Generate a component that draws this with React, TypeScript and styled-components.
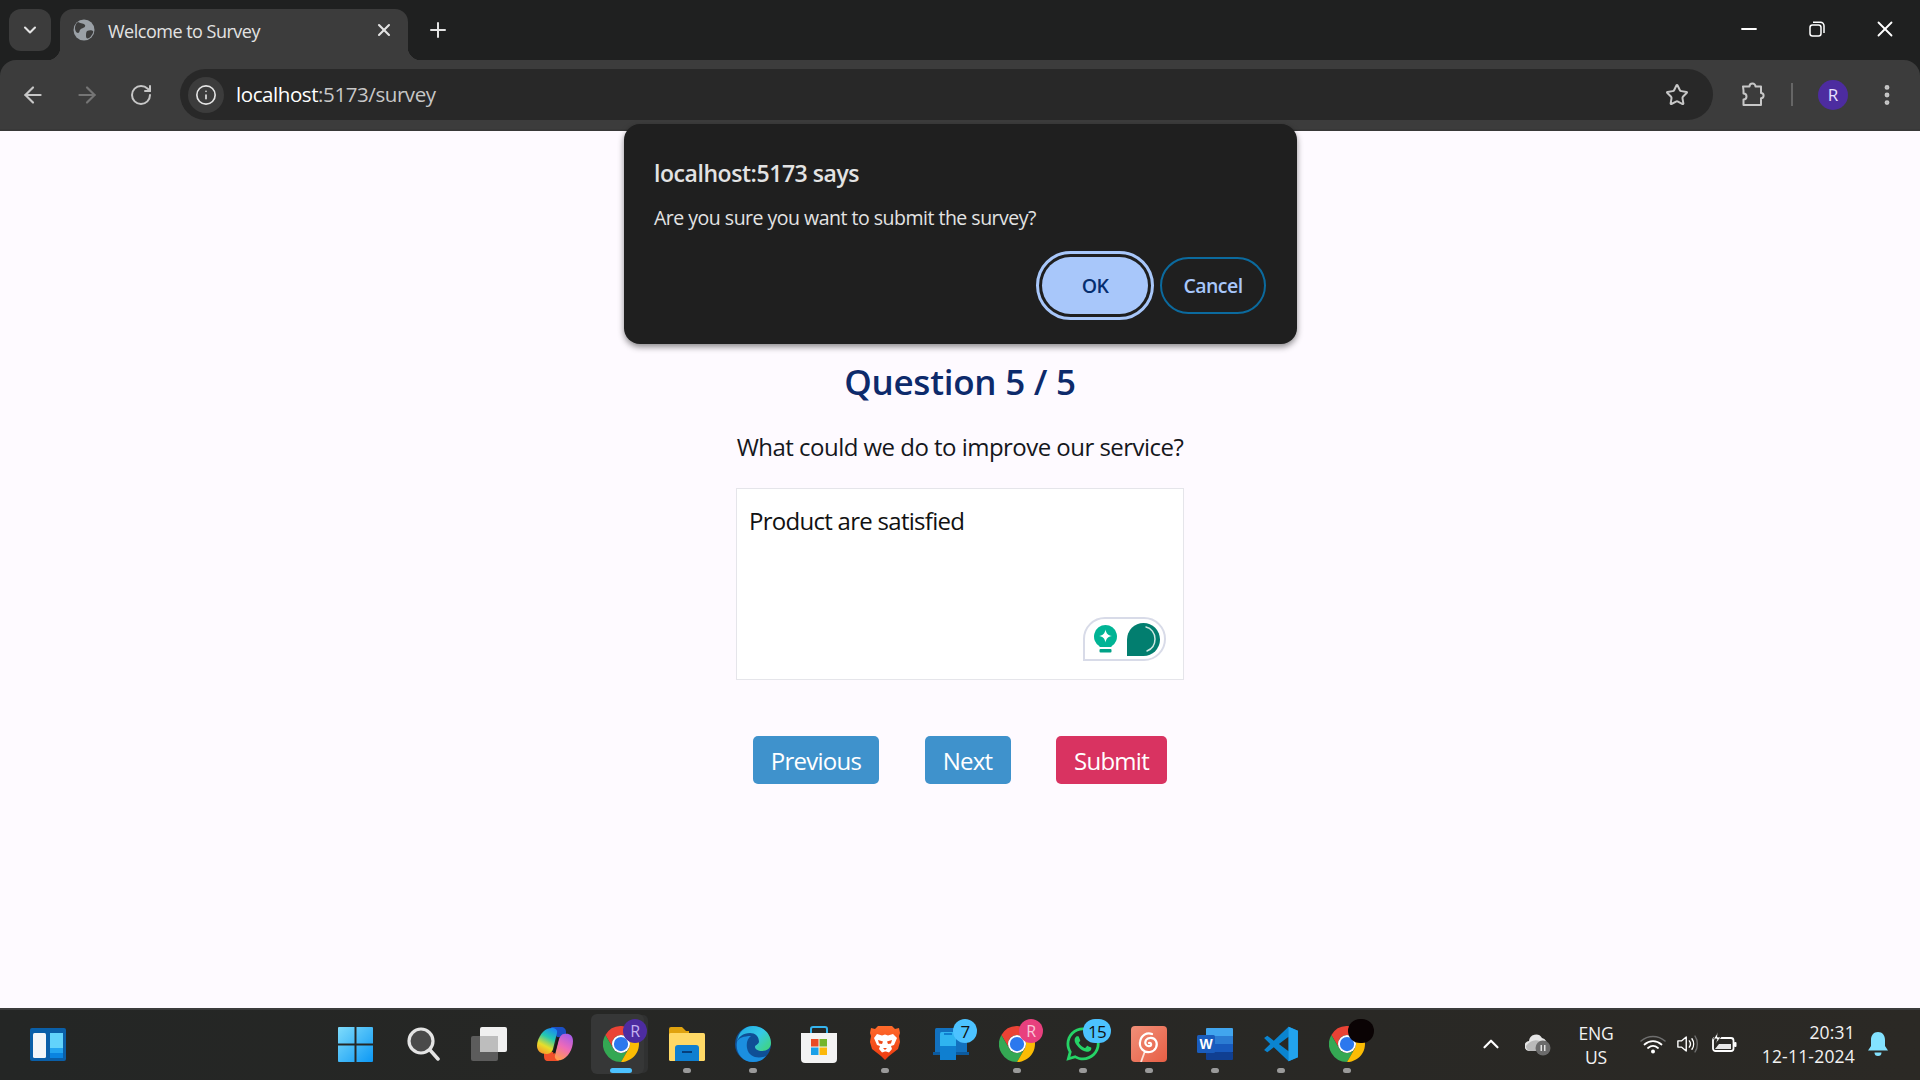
import React from "react";
import styled, { createGlobalStyle } from "styled-components";
import { ArrowLeft, ArrowRight, ChevronDown, ChevronUp, Info, Minus, MoreVertical, Plus, RotateCw, Star, X } from "lucide-react";
import { FaWhatsapp } from "react-icons/fa";

const uiFont = `"Open Sans", "Noto Sans", sans-serif`;

const GlobalStyle = createGlobalStyle`
  html, body {
    margin: 0;
    padding: 0;
    height: 100%;
    overflow: hidden;
    font-family: ${uiFont};
  }
  * {
    box-sizing: border-box;
  }
`;

const Screen = styled.div`
  position: relative;
  display: flex;
  flex-direction: column;
  width: 1920px;
  height: 1080px;
  background: #1f2020;
`;

/* tab strip */
const TabStrip = styled.div`
  display: flex;
  align-items: flex-start;
  height: 60px;
  padding: 9px 0 0 9px;
  color: #fff;
`;

const TabSearch = styled.div`
  display: flex;
  align-items: center;
  justify-content: center;
  width: 42px;
  height: 42px;
  border-radius: 12px;
  background: #3c3c3c;
`;

const Tab = styled.div`
  position: relative;
  display: flex;
  align-items: center;
  width: 348px;
  height: 51px;
  margin-left: 9px;
  padding: 0 14px 9px 13px;
  border-radius: 13px 13px 0 0;
  background: #3c3c3c;

  &::before,
  &::after {
    content: "";
    position: absolute;
    bottom: 0;
    width: 13px;
    height: 13px;
  }
  &::before {
    left: -13px;
    background: radial-gradient(circle at 0 0, transparent 13px, #3c3c3c 13.5px);
  }
  &::after {
    right: -13px;
    background: radial-gradient(circle at 100% 0, transparent 13px, #3c3c3c 13.5px);
  }
`;

const TabTitle = styled.span`
  flex: 1;
  margin: 2px 0 0 13px;
  font-size: 18px;
  letter-spacing: -0.5px;
  color: #e3e3e3;
`;

const NewTab = styled.div`
  display: flex;
  align-items: center;
  justify-content: center;
  width: 42px;
  height: 42px;
  margin-left: 9px;
`;

const WindowControls = styled.div`
  display: flex;
  margin-left: auto;
  padding-right: 1px;
`;

const WindowButton = styled.div`
  display: flex;
  align-items: center;
  justify-content: center;
  width: 68px;
  height: 40px;
`;

/* toolbar */
const Toolbar = styled.div`
  display: flex;
  align-items: center;
  height: 71px;
  padding: 0 19px 0 6px;
  border-radius: 16px 16px 0 0;
  border-bottom: 2px solid #383838;
  background: #3c3c3c;
`;

const NavButton = styled.div<{ $dim?: boolean }>`
  display: flex;
  align-items: center;
  justify-content: center;
  width: 54px;
  color: ${(p) => (p.$dim ? "#757575" : "#c7c7c7")};
`;

const Omnibox = styled.div`
  display: flex;
  align-items: center;
  flex: 1;
  height: 51px;
  margin-left: 12px;
  padding: 0 24px 0 8px;
  border-radius: 26px;
  background: #282828;
`;

const InfoChip = styled.div`
  display: flex;
  align-items: center;
  justify-content: center;
  width: 36px;
  height: 36px;
  border-radius: 50%;
  background: #3c3c3c;
  color: #e3e3e3;
`;

const Url = styled.div`
  flex: 1;
  margin: -2px 0 0 12px;
  font-size: 20.5px;
  letter-spacing: -0.42px;
  color: #c7c7c7;

  b {
    font-weight: 400;
    color: #fff;
  }
`;

const ToolSlot = styled.div<{ $w: number }>`
  display: flex;
  align-items: center;
  justify-content: center;
  width: ${(p) => p.$w}px;
  color: #c7c7c7;
`;

const ToolDivider = styled.div`
  width: 2px;
  height: 23px;
  background: #666;
`;

const Avatar = styled.div`
  display: flex;
  align-items: center;
  justify-content: center;
  width: 30px;
  height: 30px;
  border-radius: 50%;
  background: #4d2ca0;
  color: #e9e0ff;
  font-size: 17px;
`;

/* page */
const Page = styled.main`
  flex: 1;
  background: #fefaff;
`;

const Survey = styled.div`
  display: flex;
  flex-direction: column;
  align-items: center;
  width: 448px;
  margin: 0 auto;
  padding-top: 228px;
`;

const Heading = styled.h1`
  margin: 0;
  font-size: 35px;
  line-height: 46px;
  font-weight: 600;
  letter-spacing: -0.25px;
  white-space: nowrap;
  color: #0d2a6b;
`;

const Question = styled.p`
  margin: 26px 0 1px;
  font-size: 24px;
  line-height: 32px;
  letter-spacing: -0.53px;
  white-space: nowrap;
  color: #15171c;
`;

const AnswerBox = styled.div`
  position: relative;
  width: 448px;
  height: 192px;
  margin-top: 24px;
`;

const Answer = styled.textarea`
  display: block;
  width: 100%;
  height: 100%;
  padding: 15px 12px;
  border: 1px solid #e5e5ea;
  background: #fff;
  font-family: ${uiFont};
  font-size: 24px;
  line-height: 33px;
  letter-spacing: -0.72px;
  color: #111;
  resize: none;
  outline: none;
`;

const AssistBadge = styled.div`
  position: absolute;
  left: 347px;
  top: 129px;
  display: flex;
  align-items: center;
  gap: 10px;
  width: 83px;
  height: 44px;
  padding-left: 9px;
  border: 2px solid #d8dbe8;
  border-radius: 22px 22px 22px 0;
  background: #fff;
`;

const ButtonRow = styled.div`
  display: flex;
  gap: 45.5px;
  margin-top: 56px;
`;

const ActionButton = styled.button<{ $w: number; $danger?: boolean }>`
  width: ${(p) => p.$w}px;
  height: 48px;
  padding: 0;
  border: none;
  border-radius: 5px;
  background: ${(p) => (p.$danger ? "#d93361" : "#3f92cc")};
  color: #fff;
  font-family: ${uiFont};
  font-size: 24px;
  letter-spacing: -0.75px;
`;

/* alert dialog */
const Dialog = styled.div`
  position: absolute;
  top: 124px;
  left: calc(50% - 336px);
  width: 673px;
  height: 220px;
  padding: 33px 31px 30px 30px;
  border-radius: 16px;
  background: #1f1f1f;
  box-shadow: 0 3px 6px rgba(0, 0, 0, 0.45);
  color: #e3e3e3;
`;

const DialogTitle = styled.div`
  font-size: 23px;
  line-height: 32px;
  font-weight: 600;
  letter-spacing: -0.44px;
`;

const DialogMessage = styled.div`
  margin-top: 15px;
  font-size: 19.5px;
  line-height: 28px;
  letter-spacing: -0.5px;
`;

const DialogActions = styled.div`
  display: flex;
  justify-content: flex-end;
  gap: 12px;
  margin-top: 25px;
`;

const DialogButton = styled.button<{ $primary?: boolean }>`
  width: 106px;
  height: 57px;
  padding: 0;
  border: ${(p) => (p.$primary ? "none" : "2px solid #0b6a9e")};
  border-radius: 29px;
  background: ${(p) => (p.$primary ? "#a8c7fa" : "transparent")};
  color: ${(p) => (p.$primary ? "#062e6f" : "#a8c7fa")};
  font-family: ${uiFont};
  font-size: 19.5px;
  font-weight: 600;
  letter-spacing: -0.55px;
  outline: ${(p) => (p.$primary ? "3px solid #a8c7fa" : "none")};
  outline-offset: 3px;
`;

/* taskbar */
const Taskbar = styled.footer`
  display: flex;
  height: 72px;
  padding-left: 15px;
  background: linear-gradient(90deg, #242625, #2b2925);
  box-shadow: inset 0 2px 0 #3c3c3c;
  color: #fff;
`;

const AppSlot = styled.div<{ $start?: boolean; $gap?: number }>`
  position: relative;
  display: flex;
  align-items: center;
  justify-content: center;
  flex: none;
  width: 66px;
  height: 72px;
  margin-left: ${(p) => p.$gap ?? 0}px;
  padding-right: ${(p) => (p.$start ? 3 : 0)}px;
`;

const ActiveTile = styled.div`
  position: absolute;
  left: 3px;
  top: 6px;
  width: 53px;
  height: 60px;
  border-radius: 6px;
  background: #363737;
  box-shadow: 5px 0 0 -1px #303131;
`;

const TileIcon = styled.span`
  position: relative;
  line-height: 0;
`;

const RunDot = styled.div`
  position: absolute;
  left: 29px;
  top: 60px;
  width: 8px;
  height: 5px;
  border-radius: 3px;
  background: #9a9a9a;
`;

const ActiveBar = styled.div`
  position: absolute;
  left: 22px;
  top: 60px;
  width: 22px;
  height: 5px;
  border-radius: 3px;
  background: #4cc2ff;
`;

const Badge = styled.div<{ $bg: string; $w?: number; $dark?: boolean; $ink?: string }>`
  position: absolute;
  left: ${(p) => 47 - (p.$w ?? 24) / 2}px;
  top: 11px;
  display: flex;
  align-items: center;
  justify-content: center;
  width: ${(p) => p.$w ?? 24}px;
  height: 24px;
  border-radius: 12px;
  background: ${(p) => p.$bg};
  color: ${(p) => (p.$dark ? "#111" : p.$ink ?? "#c4b2f0")};
  font-size: ${(p) => (p.$dark ? 17 : 16)}px;
  letter-spacing: -0.6px;
`;

const Tray = styled.div`
  display: flex;
  margin-left: auto;
  padding-right: 22px;
`;

const TraySlot = styled.div<{ $w: number; $lift?: number }>`
  display: flex;
  align-items: center;
  justify-content: center;
  width: ${(p) => p.$w}px;
  padding-bottom: ${(p) => p.$lift ?? 0}px;
`;

const Lang = styled.div`
  align-self: center;
  width: 66px;
  padding-top: 2px;
  text-align: center;
  font-size: 17.5px;
  line-height: 24px;
  letter-spacing: -0.2px;
  color: #f2f2f2;
`;

const Clock = styled.div`
  width: 109px;
  padding-right: 3px;
  text-align: right;
  font-size: 17.5px;
  line-height: 24px;
  letter-spacing: 0.2px;
  color: #f2f2f2;
`;

function Globe() {
  return (
    <svg width="22" height="22" viewBox="0 0 22 22">
      <circle cx="11" cy="11" r="10.5" fill="#9aa0a6" />
      <path d="M5 3c3 2 6 1 7 3s-2 3-4 4-1 4-3 4-3-3-3-5 1-5 3-6zM14 12c2-1 5-1 6 0s-2 6-4 7-3 0-3-2 0-4 1-5z" fill="#3c3c3c" />
    </svg>
  );
}

function RestoreIcon() {
  return (
    <svg width="16" height="16" viewBox="0 0 16 16" fill="none" stroke="#fff" strokeWidth="1.5">
      <rect x="1" y="4" width="11" height="11" rx="2.5" />
      <path d="M4 1.2h7.5A3.5 3.5 0 0 1 15 4.7V12" />
    </svg>
  );
}

function PuzzleIcon() {
  return (
    <svg width="26" height="26" viewBox="0 0 26 26" fill="none" stroke="#c7c7c7" strokeWidth="2" strokeLinejoin="round" style={{ marginLeft: 2 }}>
      <path d="M3 5.5h6.5a3 3 0 0 1 6 0H21v6.5a2.6 2.6 0 0 1 0 5.2V24H3.5v-5.500a3 3 0 0 0 0-6V9.500z" transform="translate(0 -1)" />
    </svg>
  );
}

function ChromeLogo() {
  return (
    <svg width="36" height="36" viewBox="0 0 48 48">
      <path d="M3.2 12A24 24 0 0 1 44.78 12L24 12A12 12 0 0 0 13.6 30Z" fill="#ea4335" />
      <path d="M3.2 12A24 24 0 0 0 24 48L34.4 30A12 12 0 0 1 13.6 30Z" fill="#34a853" />
      <path d="M44.78 12A24 24 0 0 1 24 48L34.4 30A12 12 0 0 0 24 12Z" fill="#fbbc04" />
      <circle cx="24" cy="24" r="12" fill="#fff" />
      <circle cx="24" cy="24" r="9.500" fill="#2b78ee" />
    </svg>
  );
}

function WidgetsIcon() {
  return (
    <svg width="36" height="33" viewBox="0 0 36 33">
      <rect width="36" height="33" rx="2" fill="#0a5fa8" />
      <rect x="3" y="5" width="13" height="25" rx="1.5" fill="#f4f6f8" />
      <rect x="20" y="5" width="13" height="15" fill="#62d3fb" />
      <rect x="20" y="20" width="13" height="5" fill="#23a5f0" />
      <rect x="20" y="25" width="13" height="5" fill="#0a84e0" />
    </svg>
  );
}

function StartIcon() {
  return (
    <svg width="35" height="35" viewBox="0 0 35 35">
      <defs>
        <linearGradient id="startFill" x1="0" y1="0" x2="1" y2="1">
          <stop offset="0" stopColor="#7fdcfb" />
          <stop offset="1" stopColor="#0c98f5" />
        </linearGradient>
      </defs>
      <path d="M1 0h15.500v16.500H0V1a1 1 0 0 1 1-1zM18.500 0H34a1 1 0 0 1 1 1v15.500H18.500zM0 18.500h16.500V35H1a1 1 0 0 1-1-1zM18.500 18.500H35V34a1 1 0 0 1-1 1H18.500z" fill="url(#startFill)" />
    </svg>
  );
}

function SearchIcon() {
  return (
    <svg width="33" height="34" viewBox="0 0 33 34">
      <circle cx="14" cy="14" r="12" fill="#4a4a4a" stroke="#e4e4e4" strokeWidth="3.200" />
      <path d="M23 23l8 9" stroke="#e4e4e4" strokeWidth="3.500" strokeLinecap="round" />
    </svg>
  );
}

function TaskViewIcon() {
  return (
    <svg width="36" height="34" viewBox="0 0 36 34">
      <rect y="9" width="27" height="25" rx="2" fill="#5c5c5c" />
      <rect x="9" width="27" height="25" rx="2" fill="#f0f0f0" />
      <rect x="9" y="9" width="18" height="16" fill="#bdbdbd" />
    </svg>
  );
}

function CopilotIcon() {
  return (
    <svg width="36" height="34" viewBox="0 0 36 34">
      <defs>
        <linearGradient id="copilotLeft" x1="0.7" y1="0" x2="0.3" y2="1">
          <stop offset="0" stopColor="#1c8cf0" />
          <stop offset="0.35" stopColor="#24c9b0" />
          <stop offset="0.7" stopColor="#e8de2a" />
          <stop offset="1" stopColor="#f59a2a" />
        </linearGradient>
        <linearGradient id="copilotRight" x1="0.7" y1="0" x2="0.3" y2="1">
          <stop offset="0" stopColor="#a75ce8" />
          <stop offset="0.5" stopColor="#ee6ab8" />
          <stop offset="1" stopColor="#ff9a50" />
        </linearGradient>
      </defs>
      <path d="M14 0h10c3 0 5 2 5 5v5h-9z" fill="#1b4fc4" />
      <path d="M22 34H11c-3 0-4-2-4-5v-4h10z" fill="#f0502a" />
      <path d="M10 2c5-2 11-1 10 4l-4 16c-1 4-4 5-7 5-5 0-9-3-9-8 0-6 4-14 10-17z" fill="url(#copilotLeft)" />
      <path d="M27 7c5-1 9 1 9 7 0 8-5 17-12 19-4 1-7-1-6-5l4-16c1-3 3-5 5-5z" fill="url(#copilotRight)" />
      <path d="M20.500 10.500l-4.500 16 2-.5 4-15z" fill="#161616" />
    </svg>
  );
}

function ExplorerIcon() {
  return (
    <svg width="36" height="34" viewBox="0 0 36 34">
      <path d="M0 2a2 2 0 0 1 2-2h11l4 4h3v4H0z" fill="#e0a30f" />
      <rect y="6" width="36" height="28" rx="1.500" fill="#ffd966" />
      <path d="M6 34V21a3 3 0 0 1 3-3h18a3 3 0 0 1 3 3v13z" fill="#0f7fd0" />
      <rect x="13" y="24" width="10" height="2" fill="#063f7a" />
    </svg>
  );
}

function EdgeIcon() {
  return (
    <svg width="36" height="36" viewBox="0 0 36 36">
      <defs>
        <linearGradient id="edgeTop" x1="0" y1="0" x2="1" y2="0.700">
          <stop offset="0" stopColor="#1fa6e0" />
          <stop offset="0.6" stopColor="#35c9e8" />
          <stop offset="1" stopColor="#3fd38c" />
        </linearGradient>
      </defs>
      <circle cx="18" cy="18" r="18" fill="#0f4f96" />
      <path d="M2 16C3 6 10 0 18 0c10 0 18 8 18 17 0 5-4 8-9 8-4 0-7-2-7-4s3-2 4-5c0-6-4-9-9-9C8 7 3 11 2 16z" fill="url(#edgeTop)" />
      <path d="M2 16C0 26 7 36 18 36c6 0 10-2 13-6-7 3-17 2-19-8-1-6 1-10 4-12C9 10 3 12 2 16z" fill="#1b8fe0" />
    </svg>
  );
}

function StoreIcon() {
  return (
    <svg width="36" height="37" viewBox="0 0 36 37">
      <path d="M10 8V3a2 2 0 0 1 2-2h12a2 2 0 0 1 2 2v5" fill="none" stroke="#35b4ee" strokeWidth="2" />
      <path d="M0 7h36v26a4 4 0 0 1-4 4H4a4 4 0 0 1-4-4z" fill="#f3f3f3" />
      <rect x="10" y="13" width="7.500" height="7.500" fill="#ea4b25" />
      <rect x="18.500" y="13" width="7.500" height="7.500" fill="#73b52b" />
      <rect x="10" y="21.500" width="7.500" height="7.500" fill="#1ba1e8" />
      <rect x="18.500" y="21.500" width="7.500" height="7.500" fill="#fbb80a" />
    </svg>
  );
}

function BraveIcon() {
  return (
    <svg width="30" height="36" viewBox="0 0 30 36">
      <defs>
        <linearGradient id="braveFill" x1="0" y1="0" x2="0" y2="1">
          <stop offset="0" stopColor="#ff6a2a" />
          <stop offset="1" stopColor="#ee3a10" />
        </linearGradient>
      </defs>
      <path d="M8 0h14l3 3 4-1 1 5-1 3 1 6-2 7-9 7-4 4-4-4-9-7-2-7 1-6-1-3 1-5 4 1z" fill="url(#braveFill)" />
      <path d="M7 8l5 1.500 3-1 3 1 5-1.500 4 4-3 7-3 1 1 3-3 3.500-3-1-1 0-3 1-3-3.500 1-3-3-1-3-7z" fill="#fff" />
      <path d="M8 14l5 1.500-1 2.500-3-.5zM22 14l-5 1.500 1 2.500 3-.5zM13 22h4l-2 2z" fill="#f04a1a" />
    </svg>
  );
}

function DevicesIcon() {
  return (
    <svg width="36" height="32" viewBox="0 0 36 32">
      <rect x="2" width="32" height="25" rx="1.500" fill="#1271bf" />
      <rect y="24" width="36" height="3" fill="#0c5a9e" />
      <rect x="7" y="4" width="16" height="28" rx="1.500" fill="#2fb4f0" />
      <rect x="7" y="18" width="16" height="14" fill="#0f7fd0" />
      <rect x="11" y="5" width="8" height="2" fill="#0f7fd0" />
    </svg>
  );
}

function LollipopIcon() {
  return (
    <svg width="36" height="36" viewBox="0 0 36 36">
      <defs>
        <linearGradient id="lolliFill" x1="0" y1="0" x2="1" y2="1">
          <stop offset="0" stopColor="#f08f78" />
          <stop offset="1" stopColor="#e85f45" />
        </linearGradient>
      </defs>
      <rect width="36" height="36" rx="4" fill="url(#lolliFill)" />
      <path d="M14 25l-4 11" stroke="#fbe3da" strokeWidth="1.800" />
      <path d="M18 17c2-1 3 2 1 3-3 1-6-2-4-6 2-3 8-3 10 1s0 10-6 11-11-4-10-10c1-7 7-10 12-8" fill="none" stroke="#fff" strokeWidth="2.200" strokeLinecap="round" />
    </svg>
  );
}

function WordIcon() {
  return (
    <svg width="36" height="32" viewBox="0 0 36 32">
      <rect x="9" width="27" height="9" rx="1" fill="#41a5ee" />
      <rect x="9" y="8" width="27" height="8" fill="#2b7cd3" />
      <rect x="9" y="16" width="27" height="8" fill="#185abd" />
      <rect x="9" y="24" width="27" height="8" rx="1" fill="#103f91" />
      <rect y="7" width="18" height="18" rx="1.500" fill="#1a5cbc" />
      <text x="9" y="21" textAnchor="middle" fontFamily="Liberation Sans, sans-serif" fontSize="14" fontWeight="700" fill="#fff">W</text>
    </svg>
  );
}

function CodeIcon() {
  return (
    <svg width="36" height="36" viewBox="0 0 100 100">
      <path fillRule="evenodd" d="M71 2L30 41 12 27 3 33l17 17L3 67l9 6 18-14 41 39 26-11V13zM71 30v40L44 50z" fill="#0a84d0" />
      <path d="M71 2l26 11v74L71 98z" fill="#22a3ee" />
    </svg>
  );
}

function CloudIcon() {
  return (
    <svg width="26" height="24" viewBox="0 0 26 24">
      <path d="M5 19a5 5 0 0 1-1-10 7 7 0 0 1 13-3 5.500 5.500 0 0 1 4 8v5z" fill="#e6e6e6" />
      <path d="M1 14c4-5 8-7 14-5 4-1 6 2 6 5v5H5a5 5 0 0 1-4-5z" fill="#9c9c9c" opacity="0.600" />
      <circle cx="18" cy="16" r="7.500" fill="#6b6b6b" />
      <path d="M16.200 13v6M19.800 13v6" stroke="#fff" strokeWidth="1.200" />
    </svg>
  );
}

function WifiIcon() {
  return (
    <svg width="26" height="20" viewBox="0 0 26 20" fill="none" strokeLinecap="round">
      <path d="M1 7c7-6 17-6 24 0" stroke="#6e6e6e" strokeWidth="1.500" />
      <path d="M4.500 10.500c5-4.500 12-4.500 17 0M8 14c3-2.500 7-2.500 10 0" stroke="#fff" strokeWidth="1.800" />
      <circle cx="13" cy="17.500" r="2" fill="#fff" />
    </svg>
  );
}

function VolumeIcon() {
  return (
    <svg width="25" height="22" viewBox="0 0 25 22" fill="none" strokeWidth="1.600" strokeLinejoin="round" strokeLinecap="round">
      <path d="M1 7.500h4L10.500 3v16L5 14.500H1z" stroke="#fff" />
      <path d="M14 7.500c1.500 2 1.500 5 0 7M17 5c2.500 3.500 2.500 8.500 0 12" stroke="#fff" />
      <path d="M20.500 2c3.500 5 3.500 13 0 18" stroke="#6e6e6e" />
    </svg>
  );
}

function BatteryIcon() {
  return (
    <svg width="25" height="20" viewBox="0 0 25 20" fill="none">
      <rect x="1" y="6" width="20.500" height="13" rx="2.500" stroke="#fff" strokeWidth="1.800" />
      <path d="M3 17l4-5h12v5z" fill="#e8e8e8" />
      <rect x="22" y="10" width="2.500" height="5" rx="1" fill="#fff" />
      <path d="M6 0L1.500 7H5l-1.500 5L9 5H5.500z" fill="#fff" stroke="#2b2925" strokeWidth="0.800" />
    </svg>
  );
}

function BellIcon() {
  return (
    <svg width="20" height="24" viewBox="0 0 20 24">
      <path d="M10 0c4.500 0 7 3.500 7 8v6l3 4.500H0L3 14V8c0-4.500 2.500-8 7-8z" fill="#83e2ff" />
      <path d="M6.500 20.500h7a3.500 3.500 0 0 1-7 0z" fill="#83e2ff" />
    </svg>
  );
}

function BulbIcon() {
  return (
    <svg width="23" height="28" viewBox="0 0 23 28">
      <path d="M11.500 0a11.500 11.500 0 0 1 6 21.300V22H5.500v-.7A11.500 11.500 0 0 1 11.500 0z" fill="#00b495" />
      <rect x="5.500" y="24" width="12" height="3.500" rx="1" fill="#00a287" />
      <path d="M11.500 4.500c.7 4 2.500 5.800 6.500 6.500-4 .7-5.800 2.500-6.500 6.500-.7-4-2.500-5.800-6.500-6.500 4-.7 5.800-2.500 6.500-6.500z" fill="#fff" />
    </svg>
  );
}

function BlobIcon() {
  return (
    <svg width="33" height="33" viewBox="0 0 33 33">
      <path d="M0 33V16.500A16.500 16.500 0 1 1 16.500 33z" fill="#027e6f" />
      <path d="M19 4c5 1 9 6 9 12s-3 10-8 12" fill="none" stroke="#cfe8e2" strokeWidth="1.500" strokeLinecap="round" />
    </svg>
  );
}

export default function App() {
  return (
    <>
      <GlobalStyle />
      <Screen>
        <TabStrip>
          <TabSearch>
            <ChevronDown size={20} strokeWidth={2.5} color="#e3e3e3" />
          </TabSearch>
          <Tab>
            <Globe />
            <TabTitle>Welcome to Survey</TabTitle>
            <X size={20} strokeWidth={2.5} color="#e3e3e3" />
          </Tab>
          <NewTab>
            <Plus size={24} strokeWidth={2} color="#e3e3e3" />
          </NewTab>
          <WindowControls>
            <WindowButton>
              <Minus size={24} strokeWidth={1.8} />
            </WindowButton>
            <WindowButton>
              <RestoreIcon />
            </WindowButton>
            <WindowButton>
              <X size={26} strokeWidth={1.7} />
            </WindowButton>
          </WindowControls>
        </TabStrip>

        <Toolbar>
          <NavButton>
            <ArrowLeft size={26} strokeWidth={2} />
          </NavButton>
          <NavButton $dim>
            <ArrowRight size={26} strokeWidth={2} />
          </NavButton>
          <NavButton>
            <RotateCw size={24} strokeWidth={2} />
          </NavButton>
          <Omnibox>
            <InfoChip>
              <Info size={22} strokeWidth={1.8} />
            </InfoChip>
            <Url>
              <b>localhost</b>:5173/survey
            </Url>
            <Star size={24} strokeWidth={2} color="#c7c7c7" />
          </Omnibox>
          <ToolSlot $w={78}>
            <PuzzleIcon />
          </ToolSlot>
          <ToolDivider />
          <ToolSlot $w={80}>
            <Avatar>R</Avatar>
          </ToolSlot>
          <ToolSlot $w={28}>
            <MoreVertical size={26} strokeWidth={2.5} />
          </ToolSlot>
        </Toolbar>

        <Page>
          <Survey>
            <Heading>Question 5 / 5</Heading>
            <Question>What could we do to improve our service?</Question>
            <AnswerBox>
              <Answer readOnly defaultValue="Product are satisfied" />
              <AssistBadge>
                <BulbIcon />
                <BlobIcon />
              </AssistBadge>
            </AnswerBox>
            <ButtonRow>
              <ActionButton $w={126}>Previous</ActionButton>
              <ActionButton $w={86}>Next</ActionButton>
              <ActionButton $w={111} $danger>
                Submit
              </ActionButton>
            </ButtonRow>
          </Survey>
        </Page>

        <Taskbar>
          <AppSlot>
            <WidgetsIcon />
          </AppSlot>
          <AppSlot $start $gap={243}>
            <StartIcon />
          </AppSlot>
          <AppSlot>
            <SearchIcon />
          </AppSlot>
          <AppSlot>
            <TaskViewIcon />
          </AppSlot>
          <AppSlot>
            <CopilotIcon />
          </AppSlot>
          <AppSlot>
            <ActiveTile />
            <TileIcon>
              <ChromeLogo />
            </TileIcon>
            <Badge $bg="#4d2ca0">R</Badge>
            <ActiveBar />
          </AppSlot>
          <AppSlot>
            <ExplorerIcon />
            <RunDot />
          </AppSlot>
          <AppSlot>
            <EdgeIcon />
            <RunDot />
          </AppSlot>
          <AppSlot>
            <StoreIcon />
          </AppSlot>
          <AppSlot>
            <BraveIcon />
            <RunDot />
          </AppSlot>
          <AppSlot>
            <DevicesIcon />
            <Badge $bg="#4cc2ff" $dark>
              7
            </Badge>
          </AppSlot>
          <AppSlot>
            <ChromeLogo />
            <Badge $bg="#e8407e" $ink="#f9c6d8">
              R
            </Badge>
            <RunDot />
          </AppSlot>
          <AppSlot>
            <FaWhatsapp size={38} color="#25d366" />
            <Badge $bg="#4cc2ff" $w={28} $dark>
              15
            </Badge>
            <RunDot />
          </AppSlot>
          <AppSlot>
            <LollipopIcon />
            <RunDot />
          </AppSlot>
          <AppSlot>
            <WordIcon />
            <RunDot />
          </AppSlot>
          <AppSlot>
            <CodeIcon />
            <RunDot />
          </AppSlot>
          <AppSlot>
            <ChromeLogo />
            <Badge $bg="#0a0304" $w={26} />
            <RunDot />
          </AppSlot>

          <Tray>
            <TraySlot $w={44}>
              <ChevronUp size={26} strokeWidth={2} />
            </TraySlot>
            <TraySlot $w={50}>
              <CloudIcon />
            </TraySlot>
            <Lang>
              ENG
              <br />
              US
            </Lang>
            <TraySlot $w={48}>
              <WifiIcon />
            </TraySlot>
            <TraySlot $w={22}>
              <VolumeIcon />
            </TraySlot>
            <TraySlot $w={50} $lift={4}>
              <BatteryIcon />
            </TraySlot>
            <TraySlot $w={109}>
              <Clock>
                20:31
                <br />
                12-11-2024
              </Clock>
            </TraySlot>
            <TraySlot $w={40}>
              <BellIcon />
            </TraySlot>
          </Tray>
        </Taskbar>

        <Dialog>
          <DialogTitle>localhost:5173 says</DialogTitle>
          <DialogMessage>Are you sure you want to submit the survey?</DialogMessage>
          <DialogActions>
            <DialogButton $primary>OK</DialogButton>
            <DialogButton>Cancel</DialogButton>
          </DialogActions>
        </Dialog>
      </Screen>
    </>
  );
}
